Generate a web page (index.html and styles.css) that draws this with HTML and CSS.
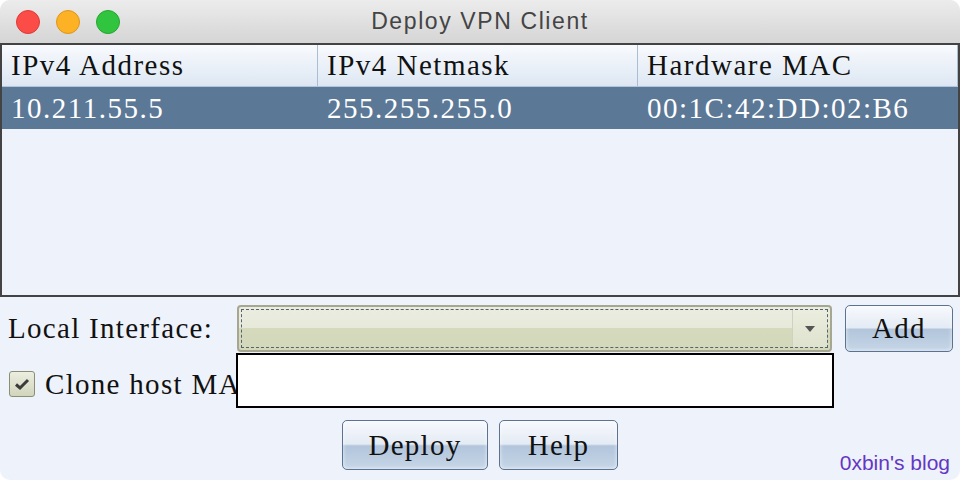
FILE: index.html
```html
<!DOCTYPE html>
<html lang="en">
<head>
  <meta charset="UTF-8">
  <title>Deploy VPN Client</title>
  <link rel="stylesheet" href="styles.css">
</head>
<body>
  <div class="window">
    <header class="titlebar">
      <div class="lights">
        <span class="light red"></span>
        <span class="light yellow"></span>
        <span class="light green"></span>
      </div>
      <div class="title">Deploy VPN Client</div>
      <div></div>
    </header>

    <div class="table">
      <div class="row head">
        <div class="cell">IPv4 Address</div>
        <div class="cell">IPv4 Netmask</div>
        <div class="cell">Hardware MAC</div>
      </div>
      <div class="row selected">
        <div class="cell">10.211.55.5</div>
        <div class="cell">255.255.255.0</div>
        <div class="cell">00:1C:42:DD:02:B6</div>
      </div>
    </div>

    <div class="form">
      <div class="form-row">
        <label class="label">Local Interface:</label>
        <div class="combo">
          <div class="combo-focus">
            <div class="combo-arrow"><span class="arrow"></span></div>
          </div>
          <div class="popup"></div>
        </div>
        <button class="btn btn-add">Add</button>
      </div>

      <div class="form-row check-row">
        <span class="checkbox">
          <svg width="24" height="24" viewBox="0 0 24 24">
            <path d="M6 12.5 L10 16 L18 8" fill="none" stroke="#3b3b3b" stroke-width="3"/>
          </svg>
        </span>
        <span class="label check-label">Clone host MAC</span>
      </div>

      <div class="actions">
        <button class="btn btn-deploy">Deploy</button>
        <button class="btn btn-help">Help</button>
      </div>
    </div>

    <div class="watermark">0xbin's blog</div>
  </div>
</body>
</html>
```

FILE: styles.css
```css
body {
  margin: 0;
  background-color: #ffffff;
}
.window {
  position: relative;
  width: 960px;
  height: 480px;
  border-radius: 10px;
  overflow: hidden;
  background-color: #eef2fa;
  display: flex;
  flex-direction: column;
  font-family: "Liberation Serif", serif;
}
.titlebar {
  height: 43px;
  flex-shrink: 0;
  display: grid;
  grid-template-columns: 1fr auto 1fr;
  align-items: center;
  background: linear-gradient(#ececec, #d5d5d5);
}
.lights {
  display: flex;
  gap: 16px;
  padding-left: 16px;
}
.light {
  width: 24px;
  height: 24px;
  border-radius: 50%;
  box-sizing: border-box;
}
.red {
  background-color: #fc4c48;
  border: 1px solid #de3a36;
}
.yellow {
  background-color: #fdb124;
  border: 1px solid #dd9618;
}
.green {
  background-color: #31c53f;
  border: 1px solid #24a62f;
}
.title {
  font-family: "Liberation Sans", sans-serif;
  font-size: 23px;
  letter-spacing: 1.6px;
  color: #444444;
}
.table {
  height: 254px;
  flex-shrink: 0;
  box-sizing: border-box;
  border: 2px solid #434343;
  background-color: #eef2fa;
}
.row {
  display: grid;
  grid-template-columns: 316px 320px 1fr;
  font-size: 29px;
  letter-spacing: 1.5px;
}
.cell {
  padding-left: 9px;
  white-space: nowrap;
  overflow: hidden;
}
.head {
  height: 42px;
  box-sizing: border-box;
  border-bottom: 1px solid #b2c5da;
  background: linear-gradient(#f8fafd, #dde7f3);
  color: #111111;
}
.head .cell {
  line-height: 41px;
  border-right: 1px solid #a9bed5;
}
.selected {
  height: 42px;
  background-color: #5c7897;
  color: #ffffff;
}
.selected .cell {
  line-height: 42px;
}
.form {
  padding-top: 8px;
}
.form-row {
  display: flex;
  align-items: center;
  gap: 13px;
  padding: 0 7px 0 8px;
}
.label {
  font-size: 29px;
  letter-spacing: 1.3px;
  color: #111111;
  white-space: nowrap;
}
.form-row > .label {
  width: 216px;
}
.combo {
  position: relative;
  flex: 1;
  height: 47px;
  box-sizing: border-box;
  border: 2px solid #a5a791;
  border-radius: 4px;
  padding: 2px;
  background: linear-gradient(#eaecdf 0, #e7eadb 50%, #d6dabd 50%, #d4d8bb 100%);
}
.combo-focus {
  height: 100%;
  box-sizing: border-box;
  border: 1px dashed #55636d;
  display: flex;
  justify-content: flex-end;
}
.combo-arrow {
  width: 34px;
  border-left: 1px solid #cfd2bc;
  background: linear-gradient(#ebeddf, #dfe2cd);
  display: flex;
  align-items: center;
  justify-content: center;
}
.arrow {
  width: 0;
  height: 0;
  border-left: 5px solid transparent;
  border-right: 5px solid transparent;
  border-top: 6px solid #545454;
}
.popup {
  position: absolute;
  top: calc(100% + 3px);
  left: -3px;
  right: -4px;
  height: 55px;
  box-sizing: border-box;
  border: 2px solid #000000;
  background-color: #ffffff;
}
.btn {
  box-sizing: border-box;
  border: 1.5px solid #5b7290;
  border-radius: 5px;
  background: linear-gradient(#f7f9fd 0, #e4ebf4 48%, #b2c5db 52%, #c6d6e7 100%);
  box-shadow: inset 0 0 4px rgba(255, 255, 255, 0.7);
  font-family: "Liberation Serif", serif;
  font-size: 29px;
  letter-spacing: 1.3px;
  color: #111111;
  padding: 0;
  cursor: pointer;
}
.btn-add {
  width: 108px;
  height: 47px;
}
.check-row {
  height: 48px;
  margin-top: 8px;
  gap: 10px;
  padding-left: 9px;
}
.checkbox {
  width: 26px;
  height: 26px;
  box-sizing: border-box;
  border: 1px solid #8b8e77;
  border-radius: 3px;
  background: linear-gradient(#eceee0, #d2d5bb);
  display: flex;
  align-items: center;
  justify-content: center;
}
.actions {
  display: flex;
  justify-content: center;
  gap: 11px;
  margin-top: 12px;
}
.btn-deploy {
  width: 146px;
  height: 50px;
}
.btn-help {
  width: 119px;
  height: 50px;
}
.watermark {
  position: absolute;
  right: 10px;
  bottom: 5px;
  font-family: "Liberation Sans", sans-serif;
  font-size: 21px;
  color: #6337c4;
}
```
